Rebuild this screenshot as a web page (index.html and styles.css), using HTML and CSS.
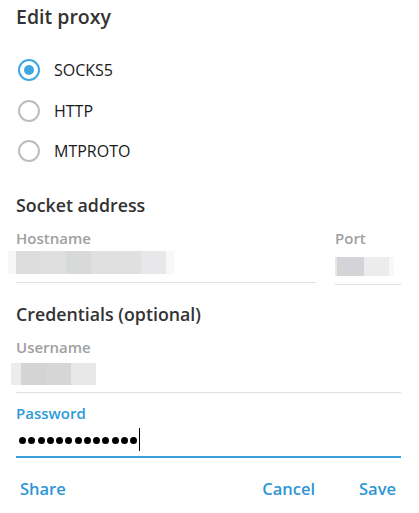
FILE: index.html
```html
<!DOCTYPE html>
<html>
<head>
<meta charset="utf-8">
<link rel="stylesheet" href="styles.css">
</head>
<body>
<div class="box">
  <div class="title">Edit proxy</div>
  <div class="radios">
    <div class="radio"><span class="circle on"></span><span class="rlabel">SOCKS5</span></div>
    <div class="radio"><span class="circle"></span><span class="rlabel">HTTP</span></div>
    <div class="radio"><span class="circle"></span><span class="rlabel">MTPROTO</span></div>
  </div>

  <div class="section s1">Socket address</div>
  <div class="pair">
    <div class="field">
      <div class="flabel">Hostname</div>
      <div class="blur host">
        <span class="b" style="width:8px;background:#f7f7f7"></span>
        <span class="b" style="width:25px;background:#dddddd"></span>
        <span class="b" style="width:25px;background:#dfdfdf"></span>
        <span class="b" style="width:25px;background:#d8dad9"></span>
        <span class="b" style="width:50px;background:#e0e0e0"></span>
        <span class="b" style="width:25px;background:#e8e8ea"></span>
        <span class="b" style="width:8px;background:#f8f8f8"></span>
      </div>
      <div class="line"></div>
    </div>
    <div class="field">
      <div class="flabel">Port</div>
      <div class="blur port">
        <span class="b" style="width:2px;background:#f2e6dc"></span>
        <span class="b" style="width:27px;background:#d3d4d8"></span>
        <span class="b" style="width:25px;background:#ececec"></span>
        <span class="b" style="width:5px;background:#f8f8f8"></span>
      </div>
      <div class="line"></div>
    </div>
  </div>

  <div class="section s2">Credentials (optional)</div>
  <div class="field">
    <div class="flabel">Username</div>
    <div class="blur user">
      <span class="b" style="width:10px;background:#ececec"></span>
      <span class="b" style="width:25px;background:#d4d4d4"></span>
      <span class="b" style="width:25px;background:#d6d6d6"></span>
      <span class="b" style="width:25px;background:#e8e8e8"></span>
    </div>
    <div class="line"></div>
  </div>

  <div class="field pw">
    <div class="flabel active">Password</div>
    <div class="dots">
      <span class="dot"></span><span class="dot"></span><span class="dot"></span><span class="dot"></span><span class="dot"></span><span class="dot"></span><span class="dot"></span><span class="dot"></span><span class="dot"></span><span class="dot"></span><span class="dot"></span><span class="dot"></span><span class="dot"></span><span class="caret"></span>
    </div>
    <div class="line blue"></div>
  </div>

  <div class="buttons">
    <span class="btn share">Share</span>
    <span class="spacer"></span>
    <span class="btn">Cancel</span>
    <span class="btn save">Save</span>
  </div>
</div>
</body>
</html>
```

FILE: styles.css
```css
html, body {
  margin: 0;
  padding: 0;
  background: #ffffff;
}
body {
  font-family: "Open Sans", "Liberation Sans", sans-serif;
  color: #303030;
}
.box {
  width: 419px;
  height: 513px;
  padding: 0 18px 0 16px;
  box-sizing: border-box;
}
.title {
  font-size: 19.5px;
  font-weight: 600;
  line-height: 34px;
  height: 34px;
  color: #333333;
}
.radios {
  margin-top: 16px;
  display: flex;
  flex-direction: column;
}
.radio {
  height: 40.5px;
  display: flex;
  align-items: center;
}
.circle {
  width: 18px;
  height: 18px;
  border: 2px solid #bdbdbd;
  border-radius: 50%;
  margin-left: 2px;
  box-sizing: content-box;
  position: relative;
  flex: none;
}
.circle.on {
  border-color: #40a7e3;
}
.circle.on::after {
  content: "";
  position: absolute;
  left: 4px;
  top: 4px;
  width: 10px;
  height: 10px;
  border-radius: 50%;
  background: #40a7e3;
}
.rlabel {
  margin-left: 14px;
  font-size: 16px;
  color: #1a1a1a;
}
.section {
  font-size: 17.8px;
  font-weight: 600;
  line-height: 24px;
  color: #333333;
}
.s1 { margin-top: 21px; }
.s2 { margin-top: 17px; }
.pair {
  display: grid;
  grid-template-columns: 300px 66px;
  column-gap: 19px;
}
.field {
  display: flex;
  flex-direction: column;
}
.flabel {
  font-size: 15px;
  font-weight: 600;
  line-height: 20px;
  color: #a0a0a0;
  margin-top: 11px;
}
.flabel.active {
  color: #2e9ad8;
  margin-top: 10px;
}
.blur {
  display: flex;
}
.b {
  display: block;
  height: 100%;
}
.host {
  height: 23px;
  margin-top: 3px;
  margin-left: -8px;
}
.port {
  height: 19px;
  margin-top: 9px;
}
.user {
  height: 22px;
  margin-top: 6px;
  margin-left: -5px;
}
.line {
  height: 1px;
  background: #e0e0e0;
  margin-top: 8px;
}
.field > .user + .line { margin-top: 7px; }
.dots {
  height: 24px;
  margin-top: 5px;
  display: flex;
  align-items: center;
  gap: 2.25px;
  padding-left: 3px;
}
.dot {
  width: 7px;
  height: 7px;
  border-radius: 50%;
  background: #000000;
  flex: none;
  margin-top: 2px;
}
.caret {
  width: 1px;
  height: 23px;
  background: #000000;
  flex: none;
}
.line.blue {
  height: 2px;
  background: #3a9fdc;
  margin-top: 4px;
}
.buttons {
  display: flex;
  align-items: center;
  margin-top: 19px;
  height: 24px;
}
.btn {
  font-size: 16.5px;
  font-weight: 600;
  color: #2e96d6;
  line-height: 24px;
}
.share { margin-left: 4px; }
.spacer { flex: 1; }
.save { margin-left: 44px; margin-right: 5px; }
```
